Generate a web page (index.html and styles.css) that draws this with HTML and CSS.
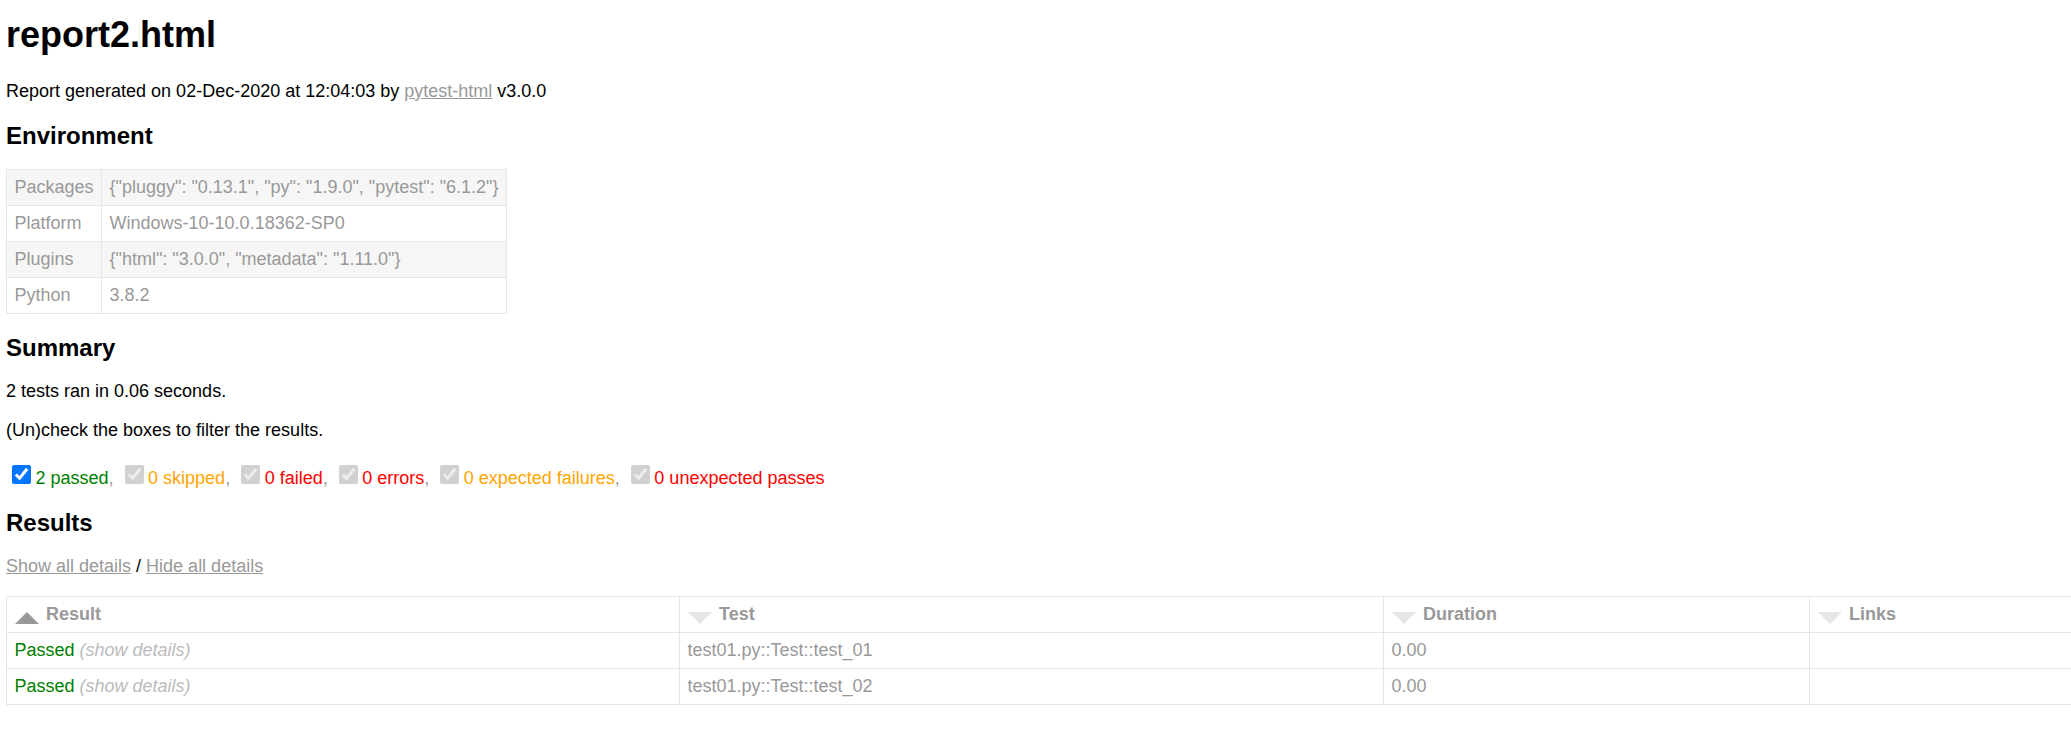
FILE: index.html
```html
<!DOCTYPE html>
<html>
<head>
<meta charset="utf-8">
<title>Test Report</title>
<link rel="stylesheet" href="styles.css">
</head>
<body>
<h1>report2.html</h1>
<p class="meta">Report generated on 02-Dec-2020 at 12:04:03 by <a href="#">pytest-html</a> v3.0.0</p>
<h2>Environment</h2>
<table class="env">
  <tr><td>Packages</td><td>{"pluggy": "0.13.1", "py": "1.9.0", "pytest": "6.1.2"}</td></tr>
  <tr><td>Platform</td><td>Windows-10-10.0.18362-SP0</td></tr>
  <tr><td>Plugins</td><td>{"html": "3.0.0", "metadata": "1.11.0"}</td></tr>
  <tr><td>Python</td><td>3.8.2</td></tr>
</table>
<h2>Summary</h2>
<p>2 tests ran in 0.06 seconds. </p>
<p>(Un)check the boxes to filter the results.</p>
<div class="filters"><input class="filter" type="checkbox" checked><span class="passed">2 passed</span>, <input class="filter" type="checkbox" checked disabled><span class="skipped">0 skipped</span>, <input class="filter" type="checkbox" checked disabled><span class="failed">0 failed</span>, <input class="filter" type="checkbox" checked disabled><span class="error">0 errors</span>, <input class="filter" type="checkbox" checked disabled><span class="xfailed">0 expected failures</span>, <input class="filter" type="checkbox" checked disabled><span class="xpassed">0 unexpected passes</span></div>
<h2>Results</h2>
<p class="toggles"><a href="#">Show all details</a>&nbsp;/&nbsp;<a href="#">Hide all details</a></p>
<div class="results-wrap">
<table class="results">
  <colgroup>
    <col class="c-result">
    <col class="c-test">
    <col class="c-duration">
    <col class="c-links">
  </colgroup>
  <thead>
    <tr>
      <th class="asc active"><span class="sort-icon"></span>Result</th>
      <th class="inactive"><span class="sort-icon"></span>Test</th>
      <th class="inactive"><span class="sort-icon"></span>Duration</th>
      <th class="inactive"><span class="sort-icon"></span>Links</th>
    </tr>
  </thead>
  <tbody>
    <tr class="passed">
      <td class="col-result">Passed<span class="expander"> (show details)</span></td>
      <td>test01.py::Test::test_01</td>
      <td>0.00</td>
      <td></td>
    </tr>
    <tr class="passed">
      <td class="col-result">Passed<span class="expander"> (show details)</span></td>
      <td>test01.py::Test::test_02</td>
      <td>0.00</td>
      <td></td>
    </tr>
  </tbody>
</table>
</div>
</body>
</html>
```

FILE: styles.css
```css
html, body {
  background: #fff;
}
body {
  margin: 0;
  padding: 0 0 0 6px;
  font-family: "Liberation Sans", Arial, Helvetica, sans-serif;
  font-size: 18px;
  line-height: 21px;
  color: #999;
  overflow: hidden;
}
h1 {
  font-size: 36px;
  line-height: 41px;
  font-weight: bold;
  color: #000;
  margin: 14px 0 26px;
}
h2 {
  font-size: 24px;
  line-height: 28px;
  font-weight: bold;
  color: #000;
  margin: 20px 0 19px;
}
p {
  color: #000;
  margin: 18px 0;
}
a {
  color: #999;
}
table {
  border-collapse: collapse;
}
.env td {
  padding: 7px 7.5px;
  border: 1px solid #e6e6e6;
  vertical-align: middle;
}
.env tr:nth-child(odd) {
  background-color: #f6f6f6;
}
.filters {
  color: #999;
}
.filters input {
  width: 19px;
  height: 19px;
  margin: 6px 4.5px 0 6px;
  vertical-align: baseline;
}
span.passed, .passed .col-result {
  color: green;
}
span.skipped, span.xfailed {
  color: orange;
}
span.failed, span.error, span.xpassed {
  color: red;
}
.toggles {
  margin-bottom: 19px;
}
.results-wrap {
  overflow: hidden;
}
.results {
  table-layout: fixed;
  width: 2120px;
  border: 1px solid #e6e6e6;
  color: #999;
}
.c-result { width: 673px; }
.c-test { width: 704px; }
.c-duration { width: 426px; }
.c-links { width: 317px; }
.results th, .results td {
  padding: 7px 7.5px;
  border: 1px solid #e6e6e6;
  text-align: left;
  white-space: nowrap;
}
.results th {
  font-weight: bold;
}
.expander {
  color: #bbb;
  font-style: italic;
}
.sort-icon {
  float: left;
  width: 0;
  height: 0;
  margin-right: 7.5px;
  margin-top: 7.5px;
  border-left: 12px solid transparent;
  border-right: 12px solid transparent;
}
.inactive .sort-icon {
  border-top: 12px solid #e6e6e6;
}
.asc.active .sort-icon {
  border-bottom: 12px solid #999;
}
```
